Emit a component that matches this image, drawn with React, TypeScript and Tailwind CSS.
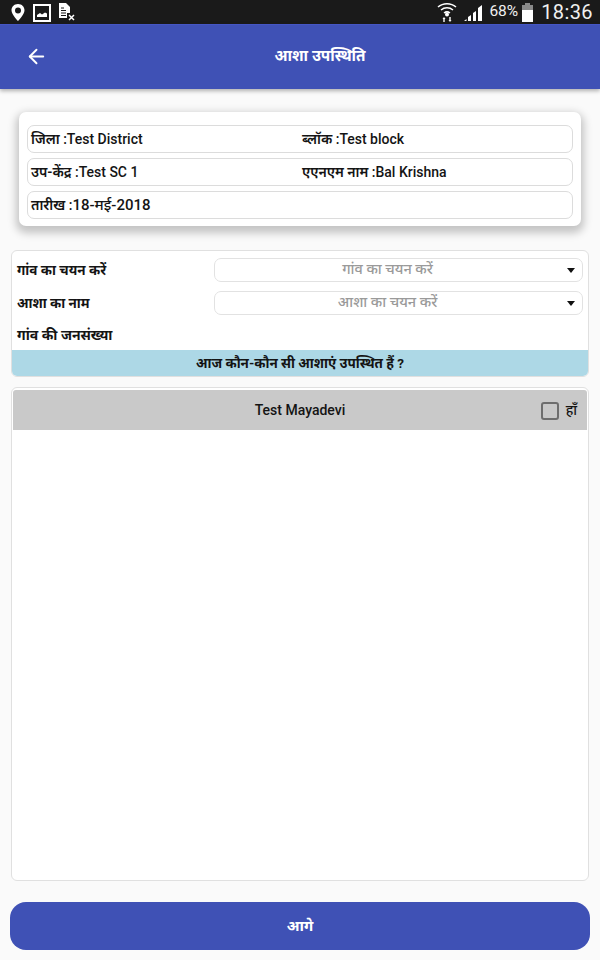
import { ArrowLeft } from "lucide-react";
import type { ReactNode } from "react";

const font = { fontFamily: 'Roboto, "Noto Sans", "Noto Sans Devanagari", "Lohit Devanagari", sans-serif' };

function StatusBar() {
  return (
    <div className="h-[24px] bg-[#1a1a1a] flex items-center text-white shrink-0">
      <div className="flex items-center pl-[10px] gap-[7px]">
        <svg width="16" height="19" viewBox="0 0 16 19"><path fillRule="evenodd" fill="#fff" d="M8 1C4 1 1.500 4 1.500 7.200 1.500 11.500 8 18 8 18s6.500-6.500 6.500-10.800C14.500 4 12 1 8 1zm0 3.500a3 3 0 110 6 3 3 0 010-6z" /></svg>
        <svg width="18" height="19" viewBox="0 0 18 19"><rect x="1" y="2" width="16" height="16" fill="none" stroke="#fff" strokeWidth="2" /><path fill="#fff" d="M4 14v-2l3-2 2 1.500 3-2 2 1v3.500z" /></svg>
        <svg width="18" height="20" viewBox="0 0 18 20"><path fill="#fff" d="M1 1h7l4 4v6H9v5H1z" /><path stroke="#1a1a1a" strokeWidth="1" d="M3 6h3M3 8.500h5M3 11h5M3 13.500h5" /><path stroke="#fff" strokeWidth="1.500" d="M11 13l5 5M16 13l-5 5" /></svg>
      </div>
      <div className="ml-auto flex items-center pr-[7px]">
        <svg width="20" height="22" viewBox="0 0 20 22" fill="none" stroke="#fff" strokeWidth="1.500"><path d="M1 6c5-4.500 13-4.500 18 0M4 9c3.500-3 8.500-3 12 0M7 12c2-1.500 4-1.500 6 0" /><path fill="#fff" stroke="none" d="M8 13.500a2 2 0 114 0 2 2 0 01-4 0zM7 16l1.500 2H7.700v3H6.300v-3H5.500zM13 21l-1.500-2h.8v-3h1.400v3h.8z" /></svg>
        <svg className="ml-[7px]" width="20" height="20" viewBox="0 0 20 20" fill="#fff"><path d="M0 19h2.500v-2zM4 19h3v-6l-3 2zM9 19h3V9l-3 2zM14 19h4V3l-4 3z" /></svg>
        <span className="ml-[5px] text-[15.500px] text-[#f0f0f0] leading-none" style={{ fontFamily: "Roboto, sans-serif" }}>68%</span>
        <svg className="ml-[3px]" width="13" height="19" viewBox="0 0 13 19"><path fill="#888" d="M4 0h5v2h3v5H1V2h3z" /><rect x="1" y="7" width="11" height="12" fill="#fff" /></svg>
        <span className="ml-[7px] text-[20px] text-[#f0f0f0] leading-none tracking-[0.4px]" style={{ fontFamily: "Roboto, sans-serif" }}>18:36</span>
      </div>
    </div>
  );
}

function Cell({ label, value, className }: { label: string; value: ReactNode; className?: string }) {
  return (
    <div className={className}>
      <span className="font-semibold">{label}</span> :{value}
    </div>
  );
}

function InfoRow({ children }: { children: ReactNode }) {
  return (
    <div className="h-[28px] rounded-[7px] border border-[#dcdcdc] bg-white flex items-center pt-[1px] pl-[3px] text-[14px] font-medium text-[#141414]">
      {children}
    </div>
  );
}

function Select({ label }: { label: string }) {
  return (
    <div className="relative w-[369px] h-[24px] rounded-[7px] border border-[#e2e2e2] bg-white flex items-center justify-center text-[14.500px] font-medium text-[#9a9a9a] pr-[22px]">
      {label}
      <span className="absolute right-[7px] top-[9px] w-0 h-0 border-x-[4px] border-x-transparent border-t-[5px] border-t-[#111]" />
    </div>
  );
}

function FormRow({ label, children, className }: { label: string; children?: ReactNode; className: string }) {
  return (
    <div className={`flex items-center px-[5px] justify-between font-bold text-[#141414] ${className}`}>
      <span>{label}</span>
      {children}
    </div>
  );
}

export default function App() {
  return (
    <div className="w-[600px] h-[960px] bg-[#fafafa] flex flex-col overflow-hidden" style={font}>
      <StatusBar />
      <header className="h-[65px] shrink-0 bg-[#3f51b5] border-t border-[#4556c4] shadow-[0_2px_4px_rgba(0,0,0,0.3)] flex items-center pl-[25px]">
        <ArrowLeft size={23} color="#fff" strokeWidth={2} className="mb-[2px]" />
        <div className="flex-1 text-center text-white text-[15.300px] font-bold pr-[8px] pb-[2px]">आशा उपस्थिति</div>
      </header>

      <section className="mt-[23px] mx-[19px] h-[114px] rounded-[7px] bg-white shadow-[0_4px_9px_3px_rgba(0,0,0,0.22)] px-[8px] pt-[13px] flex flex-col gap-[5px] shrink-0">
        <InfoRow>
          <Cell label="जिला" value="Test District" className="w-[271px]" />
          <Cell label="ब्लॉक" value="Test block" />
        </InfoRow>
        <InfoRow>
          <Cell label="उप-केंद्र" value="Test SC 1" className="w-[271px]" />
          <Cell label="एएनएम नाम" value="Bal Krishna" />
        </InfoRow>
        <InfoRow>
          <Cell label="तारीख" value={<span className="text-[15px]">18-मई-2018</span>} />
        </InfoRow>
      </section>

      <section className="mt-[24px] mx-[11px] h-[127px] shrink-0 rounded-[6px] border border-[#e0e0e0] bg-white flex flex-col overflow-hidden">
        <div className="pt-[5px] flex flex-col">
          <FormRow label="गांव का चयन करें" className="h-[28px] text-[13.500px]"><Select label="गांव का चयन करें" /></FormRow>
          <div className="h-[5px]" />
          <FormRow label="आशा का नाम" className="h-[28px] text-[13.500px]"><Select label="आशा का चयन करें" /></FormRow>
          <FormRow label="गांव की जनसंख्या" className="h-[33px] pt-[4px] text-[14px]" />
        </div>
        <div className="mt-auto h-[26px] bg-[#add8e6] flex items-center justify-center text-[13.500px] font-bold text-[#141414]">आज कौन-कौन सी आशाएं उपस्थित हैं ?</div>
      </section>

      <section className="mt-[10px] mx-[11px] h-[494px] shrink-0 rounded-[6px] border border-[#e0e0e0] bg-white p-[1px] pt-[2px]">
        <div className="h-[40px] bg-[#c9c9c9] rounded-t-[3px] flex items-center relative justify-center text-[14px] font-medium text-[#141414]">
          <span>Test Mayadevi</span>
          <div className="absolute right-[10px] top-[10px] flex items-center gap-[7px]">
            <span className="w-[18px] h-[18px] rounded-[3px] border-2 border-[#6e6e6e]" />
            <span className="text-[14px]">हाँ</span>
          </div>
        </div>
      </section>

      <button className="mt-[21px] mx-[10px] h-[48px] shrink-0 rounded-[16px] bg-[#3f51b5] text-white text-[15px] font-bold flex items-center justify-center">आगे</button>
    </div>
  );
}
